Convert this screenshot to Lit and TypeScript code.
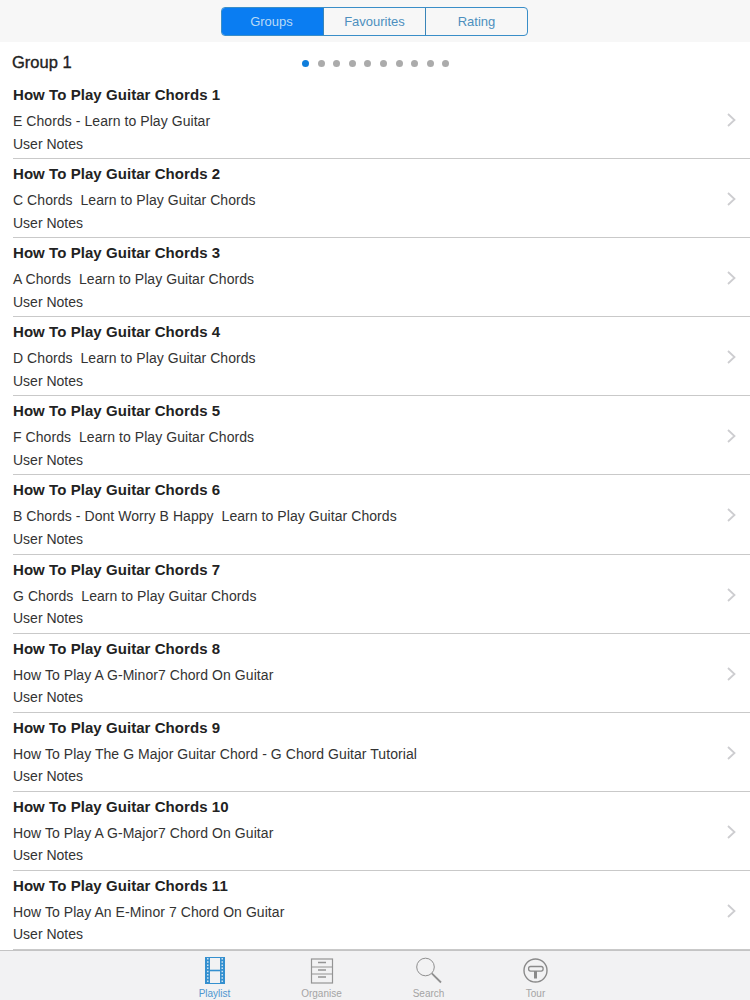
import { LitElement, html, css, svg } from "lit";
import { customElement } from "lit/decorators.js";

const ROWS = [
  ["How To Play Guitar Chords 1", "E Chords - Learn to Play Guitar"],
  ["How To Play Guitar Chords 2", "C Chords  Learn to Play Guitar Chords"],
  ["How To Play Guitar Chords 3", "A Chords  Learn to Play Guitar Chords"],
  ["How To Play Guitar Chords 4", "D Chords  Learn to Play Guitar Chords"],
  ["How To Play Guitar Chords 5", "F Chords  Learn to Play Guitar Chords"],
  ["How To Play Guitar Chords 6", "B Chords - Dont Worry B Happy  Learn to Play Guitar Chords"],
  ["How To Play Guitar Chords 7", "G Chords  Learn to Play Guitar Chords"],
  ["How To Play Guitar Chords 8", "How To Play A G-Minor7 Chord On Guitar"],
  ["How To Play Guitar Chords 9", "How To Play The G Major Guitar Chord - G Chord Guitar Tutorial"],
  ["How To Play Guitar Chords 10", "How To Play A G-Major7 Chord On Guitar"],
  ["How To Play Guitar Chords 11", "How To Play An E-Minor 7 Chord On Guitar"],
];

const filmIcon = svg`<svg class="ico" viewBox="0 0 24 28" width="24" height="28" fill="none">
  <rect x="2.5" y="1.5" width="19" height="26" stroke="#3590cf" stroke-width="1"/>
  <path d="M4.75 1v27M19.25 1v27" stroke="#3590cf" stroke-width="4.5"/>
  <path d="M4.75 2v25M19.25 2v25" stroke="#cfe3f2" stroke-width="1.5" stroke-dasharray="1.5 1.7"/>
  <path d="M7 14.5h10" stroke="#3590cf" stroke-width="1.6"/></svg>`;
const cabinetIcon = svg`<svg class="ico" viewBox="0 0 24 28" width="24" height="28" fill="none" stroke="#949494" stroke-width="1.2">
  <rect x="1.5" y="3" width="21" height="24"/><path d="M1.5 11h21M1.5 18h21"/>
  <path d="M8 6.5h8M8 14h8M8 21h8" stroke-width="1.4"/></svg>`;
const searchIcon = svg`<svg class="ico" viewBox="0 0 26 28" width="26" height="28" fill="none" stroke="#8f8f8f">
  <circle cx="9.5" cy="11" r="8.8" stroke-width="1"/><path d="M15.8 17.4L25 26.5" stroke-width="1.8"/></svg>`;
const tourIcon = svg`<svg class="ico" viewBox="0 0 26 28" width="26" height="28" fill="none" stroke="#8a8a8a">
  <circle cx="12.5" cy="14.5" r="11.5" stroke-width="1.4"/>
  <rect x="5.6" y="10.5" width="14.5" height="4.6" rx="2" stroke-width="1.3"/>
  <path d="M12.5 15V22.5" stroke-width="3"/></svg>`;

@customElement("app-root")
export class AppRoot extends LitElement {
  static styles = css`
    :host {
      display: flex;
      flex-direction: column;
      width: 750px;
      height: 1000px;
      overflow: hidden;
      background: #fff;
      font-family: "Liberation Sans", Arial, sans-serif;
      color: #222;
    }
    .top {
      flex: none;
      height: 42px;
      box-sizing: border-box;
      padding-top: 7px;
      background: #f7f7f7;
      display: flex;
      justify-content: center;
    }
    .seg {
      width: 307px;
      height: 29px;
      box-sizing: border-box;
      margin-left: -1px;
      border: 1px solid #3a8ec8;
      border-radius: 4px;
      display: grid;
      grid-template-columns: 101px 102px 102px;
      overflow: hidden;
      font-size: 13px;
    }
    .seg div {
      display: flex;
      align-items: center;
      justify-content: center;
      color: #4d8fbe;
      border-left: 1px solid #3a85b8;
    }
    .seg div:first-child { border-left: 0; padding-right: 2px; }
    .seg .on { background: #0a7df2; color: #b9daf6; }
    .head {
      flex: none;
      height: 38px;
      display: flex;
      align-items: center;
      padding-left: 12px;
      font-size: 16.5px;
      -webkit-text-stroke: 0.35px #222;
    }
    .head .label { width: 290px; padding-top: 3px; }
    .dots { display: flex; gap: 8.6px; padding-top: 4px; }
    .dots i { width: 7px; height: 7px; border-radius: 50%; background: #ababab; }
    .dots i.on { background: #0f7ddb; }
    .list { flex: 1; min-height: 0; overflow: hidden; }
    .row {
      height: 79.1px;
      box-sizing: border-box;
      margin-left: 13px;
      border-bottom: 1px solid #c9c9c9;
      position: relative;
      display: flex;
      flex-direction: column;
      white-space: pre;
    }
    .t { font-size: 15px; font-weight: 700; line-height: 18px; margin-top: 6px; letter-spacing: 0.06px; }
    .s { font-size: 14px; line-height: 18px; margin-top: 8px; color: #333; letter-spacing: 0.06px; }
    .n { font-size: 14px; line-height: 18px; margin-top: 4.5px; color: #333; }
    .chev { position: absolute; right: 14px; top: 33px; }
    .tabs {
      flex: none;
      height: 50px;
      box-sizing: border-box;
      background: #f2f2f3;
      border-top: 1px solid #c4c4c4;
      display: flex;
      justify-content: center;
    }
    .tab {
      width: 107px;
      display: flex;
      flex-direction: column;
      align-items: center;
      color: #a4a4a4;
      font-size: 10px;
      padding-top: 5px;
      box-sizing: border-box;
    }
    .tab .ico { display: block; }
    .tab span { margin-top: 4px; line-height: 11px; }
    .tab.on { color: #4f96d0; }
  `;

  render() {
    return html`
      <div class="top">
        <div class="seg"><div class="on">Groups</div><div>Favourites</div><div>Rating</div></div>
      </div>
      <div class="head">
        <div class="label">Group 1</div>
        <div class="dots">
          ${Array.from({ length: 10 }, (_, i) => html`<i class=${i === 0 ? "on" : ""}></i>`)}
        </div>
      </div>
      <div class="list">
        ${ROWS.map(
          ([t, s]) => html`<div class="row">
            <div class="t">${t}</div>
            <div class="s">${s}</div>
            <div class="n">User Notes</div>
            <svg class="chev" width="9" height="14" viewBox="0 0 9 14" fill="none" stroke="#cdcdd0" stroke-width="1.8"><path d="M1 1l6.5 6L1 13"/></svg>
          </div>`
        )}
      </div>
      <div class="tabs">
        <div class="tab on">${filmIcon}<span>Playlist</span></div>
        <div class="tab">${cabinetIcon}<span>Organise</span></div>
        <div class="tab">${searchIcon}<span>Search</span></div>
        <div class="tab">${tourIcon}<span>Tour</span></div>
      </div>
    `;
  }
}
